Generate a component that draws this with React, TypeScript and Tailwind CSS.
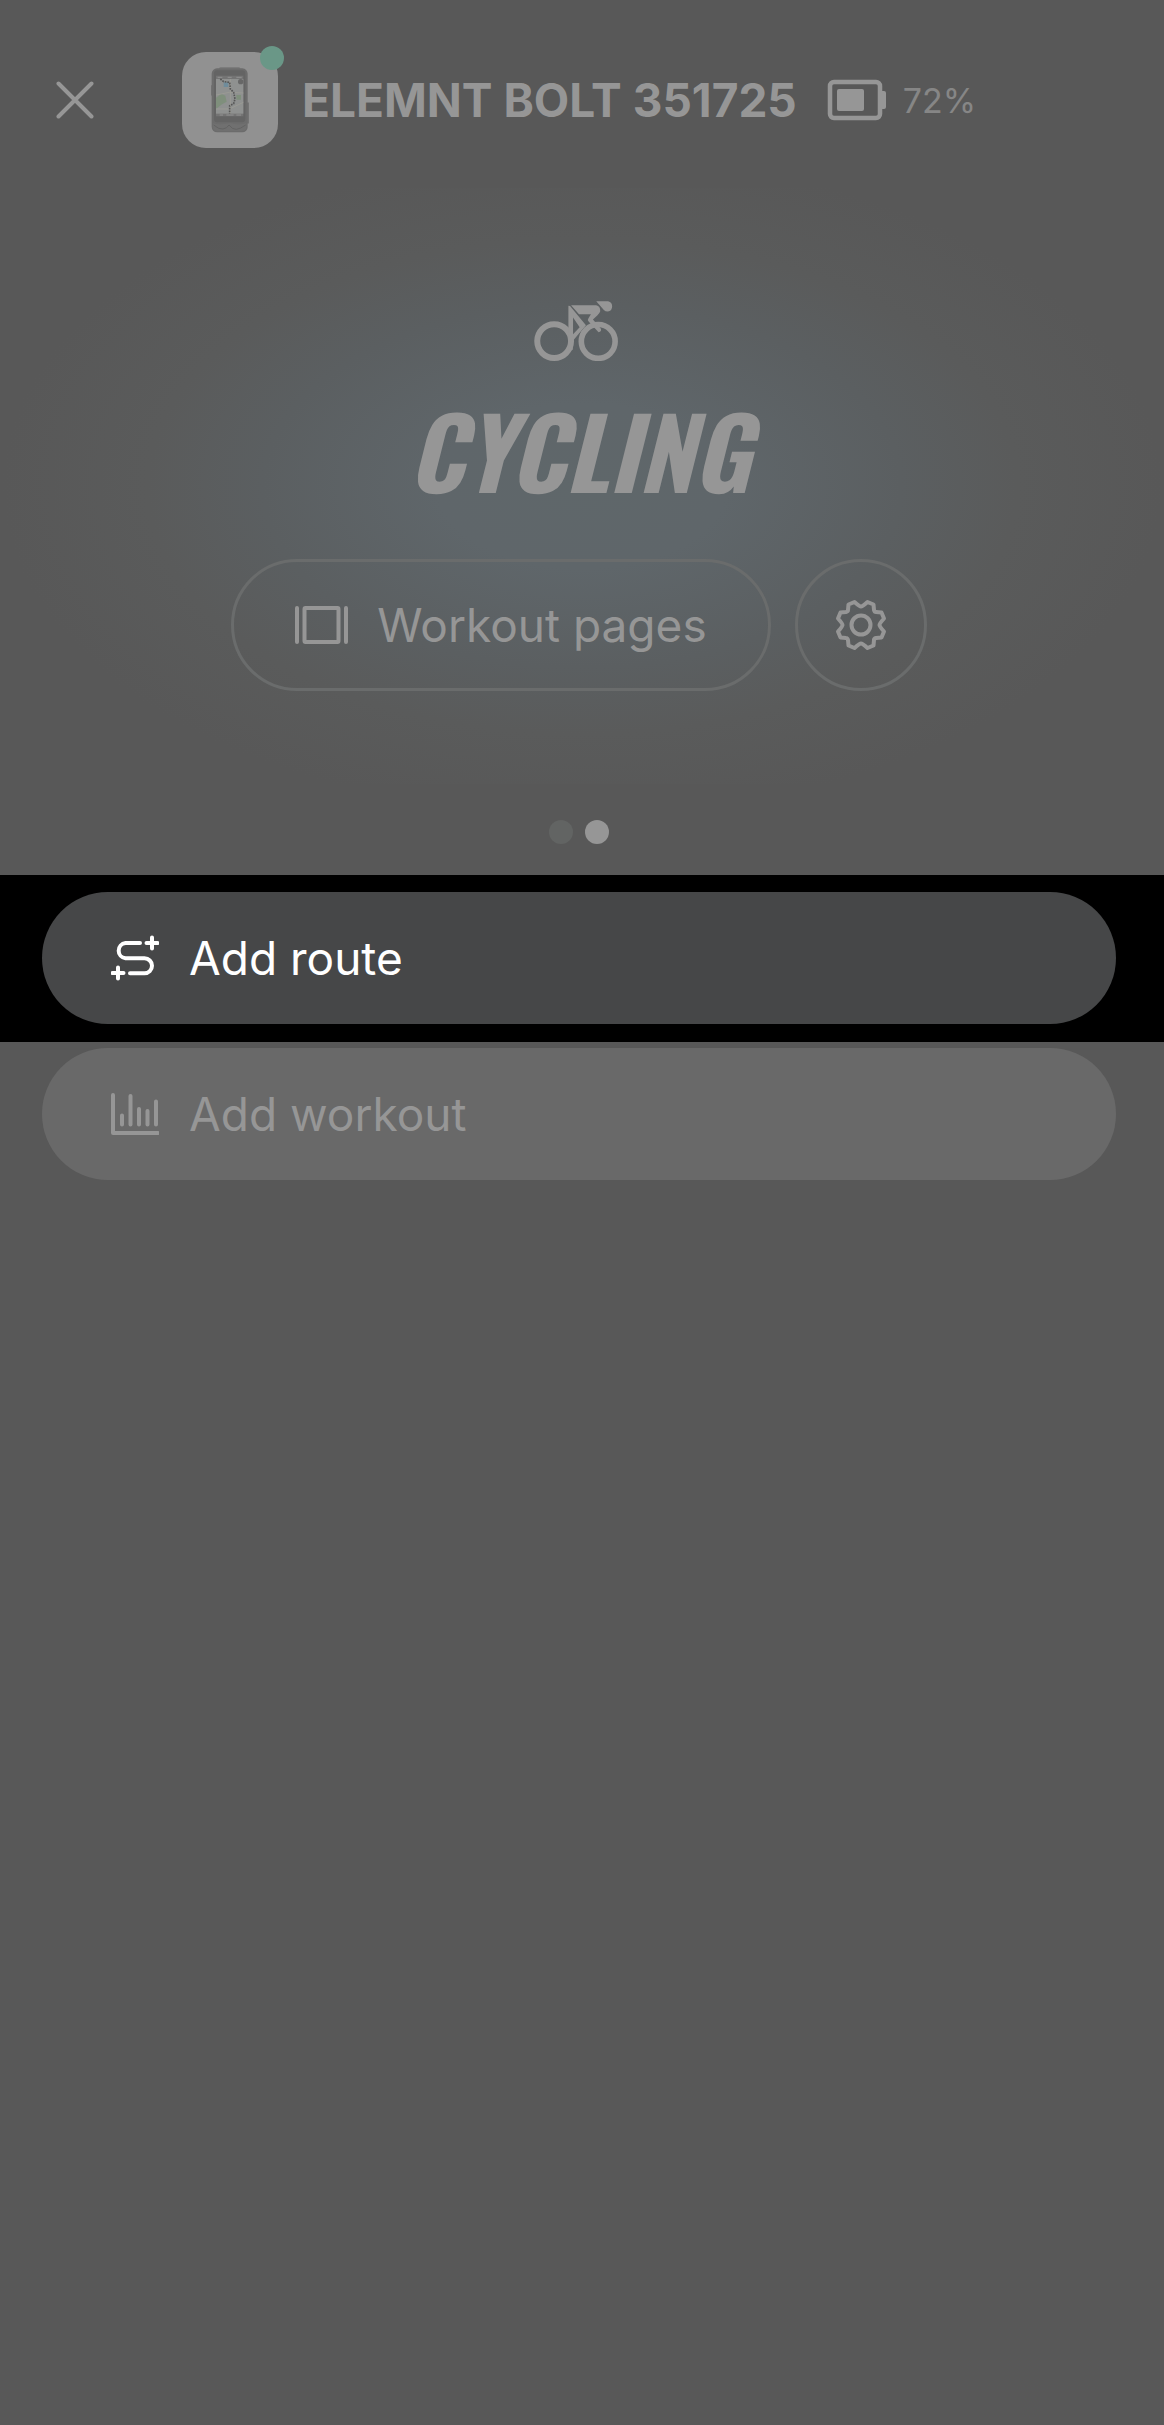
import type { ReactNode } from "react"

const CloseIcon = () => (
  <svg width="38" height="38" viewBox="0 0 38 38" fill="none" stroke="currentColor" strokeWidth="4" strokeLinecap="round">
    <path d="M2.5 2.5l33 33M35.5 2.5l-33 33" />
  </svg>
)

const DeviceIcon = () => (
  <svg width="38" height="66" viewBox="0 0 114 198">
    <rect x="0" y="54" width="6" height="32" rx="3" fill="#747474" />
    <rect x="108" y="106" width="6" height="64" rx="3" fill="#747474" />
    <rect x="24" y="0" width="64" height="12" rx="5" fill="#7c7c7c" />
    <rect x="2" y="4" width="108" height="192" rx="16" fill="#6c6c6c" />
    <rect x="9" y="10" width="94" height="156" rx="10" fill="#646464" />
    <path d="M6 168q20 8 50 0q32 8 50 0v12q0 12-14 12H20q-14 0-14-12z" fill="#707070" />
    <path d="M8 174q16 14 28 12t18-12q10 14 22 13t28-13" fill="none" stroke="#636363" strokeWidth="3" />
    <rect x="15" y="26" width="82" height="122" fill="#747474" />
    <rect x="15" y="36" width="82" height="104" fill="#8f9190" />
    <path d="M15 92l16-12 12 6 4 18-14 8-18 14zM76 84h14v14H76z" fill="#7f8f7c" />
    <rect x="38" y="46" width="14" height="14" fill="#6f8c9b" />
    <path d="M15 84l40-8 42 2M58 36v104M15 126h40l42-20" fill="none" stroke="#9a9a94" strokeWidth="3" />
    <path d="M28 36l10 8 18 2 2 20 10 10 4 20-4 14-12 6v24" fill="none" stroke="#565656" strokeWidth="5" strokeDasharray="5 3" />
    <circle cx="89" cy="44" r="8" fill="#676767" />
    <path d="M20 31h14M50 31h12M76 31h16M26 144h10M46 144h22M76 144h14" stroke="#919191" strokeWidth="3" />
  </svg>
)

const BatteryIcon = () => (
  <svg width="60" height="42" viewBox="0 0 60 42" fill="none">
    <rect x="3" y="3" width="50" height="36" rx="4" stroke="currentColor" strokeWidth="4.5" />
    <rect x="10" y="10" width="27" height="22" rx="2" fill="currentColor" />
    <path d="M54 12h3q2 0 2 2v14q0 2-2 2h-3z" fill="currentColor" />
  </svg>
)

const BikeIcon = () => (
  <svg width="90" height="60" viewBox="102 62 270 181" fill="none">
    <circle cx="162" cy="183" r="51" stroke="currentColor" strokeWidth="18" />
    <circle cx="295" cy="184" r="51" stroke="currentColor" strokeWidth="17" />
    <path
      d="M205 76l5 1 48 58-40 48v26l-13 6zM219 112v50l20-21z"
      fill="currentColor"
      fillRule="evenodd"
    />
    <path
      d="M213 75h76q13 3 12 18-2 7-9 13l-13 12 24 28q3 9-7 10l-30-32q-5-5 0-11l7-11h-36z"
      fill="currentColor"
    />
    <path d="M289 63h36q12 3 12 15 0 14-13 16-8 0-12-5z" fill="currentColor" />
  </svg>
)

const PagesIcon = () => (
  <svg width="54" height="38" viewBox="0 0 54 38" fill="none" stroke="currentColor" strokeWidth="4" strokeLinecap="round">
    <path d="M2 2v34M51 2v34" />
    <rect x="9.5" y="2" width="34" height="34" rx="1" />
  </svg>
)

const GearIcon = () => (
  <svg width="52" height="52" viewBox="-26 -26 52 52" fill="none" stroke="currentColor" strokeWidth="4" strokeLinejoin="round">
    <circle r="9.5" />
    <path d="M0-18.5Q1.5-18.5 6.5-23L12.5-20.5 13-15Q13.5-13 15-13L20.5-12.5 23-6.5Q18.5-1.5 18.5 0Q18.5 1.5 23 6.5L20.5 12.5 15 13Q13 13.5 13 15L12.5 20.5 6.5 23Q1.5 18.5 0 18.5Q-1.5 18.5-6.5 23L-12.5 20.5-13 15Q-13.5 13-15 13L-20.5 12.5-23 6.5Q-18.5 1.5-18.5 0Q-18.5-1.5-23-6.5L-20.5-12.5-15-13Q-13-13.5-13-15L-12.5-20.5-6.5-23Q-1.5-18.5 0-18.5z" />
  </svg>
)

const RouteIcon = () => (
  <svg width="48" height="46" viewBox="0 0 48 46" fill="none" stroke="currentColor" strokeWidth="4" strokeLinecap="round">
    <path d="M29 8H14.5a7.7 7.7 0 0 0 0 15.3H33.5a7.5 7.5 0 0 1 0 15H19" />
    <path d="M41 2.5v11M35.5 8h11M7 32.5v11M1.5 38h11" />
  </svg>
)

const ChartIcon = () => (
  <svg width="48" height="42" viewBox="0 0 48 42" fill="none" stroke="currentColor" strokeWidth="4" strokeLinecap="round" strokeLinejoin="round">
    <path d="M2 2v38h45M11 22.5v9M19.5 3v28.5M28 16v15.5M36.5 18v13.5M45 8.5v23" />
  </svg>
)

function ActionButton({ icon, label, className }: { icon: ReactNode; label: string; className: string }) {
  return (
    <button className={`flex h-[132px] w-full items-center gap-[30px] rounded-full pl-[69px] text-left text-[46px] ${className}`}>
      {icon}
      <span>{label}</span>
    </button>
  )
}

export default function App() {
  return (
    <main className="min-h-screen bg-[#585858] font-['Inter',sans-serif] text-[#969696]">

      {/* Header */}
      <header className="flex items-center pt-[52px] pl-14">
        <button aria-label="Close">
          <CloseIcon />
        </button>
        <div className="relative ml-[88px] flex size-24 items-center justify-center rounded-3xl bg-[#919191]">
          <DeviceIcon />
          <span className="absolute -top-1.5 -right-1.5 size-6 rounded-full bg-[#6a9787]" />
        </div>
        <h1 className="ml-6 text-[46px] font-bold whitespace-nowrap">ELEMNT BOLT 351725</h1>
        <div className="ml-[30px] flex items-center gap-4">
          <BatteryIcon />
          <span className="text-[34px] text-[#868686]">72%</span>
        </div>
      </header>

      {/* Activity */}
      <section className="mt-10 flex h-[596px] flex-col items-center bg-[radial-gradient(ellipse_580px_330px_at_50%_50%,#5f676a_0%,#5f666a_25%,#5b5f61_55%,#5a5b5b_75%,#585858_100%)] pt-[113px] pr-1.5">
        <BikeIcon />
        <h2 className="mt-8 font-['Oswald','Roboto_Condensed',sans-serif] text-[98px] leading-[112px] font-bold italic">CYCLING</h2>
        <div className="mt-[54px] flex gap-6">
          <button className="flex h-[132px] items-center gap-7 rounded-full border-3 border-[#6a6c6c] px-[61px] text-[46px]">
            <PagesIcon />
            Workout pages
          </button>
          <button aria-label="Settings" className="flex size-[132px] items-center justify-center rounded-full border-3 border-[#6a6c6c]">
            <GearIcon />
          </button>
        </div>
      </section>

      {/* Page dots */}
      <div className="flex justify-center gap-3 pt-9 pr-1.5 pb-[31px]">
        <span className="size-6 rounded-full bg-[#626463]" />
        <span className="size-6 rounded-full bg-[#969696]" />
      </div>

      {/* Actions */}
      <div className="bg-black pt-[17px] pr-12 pb-[18px] pl-[42px]">
        <ActionButton icon={<RouteIcon />} label="Add route" className="bg-[#464748] text-white" />
      </div>
      <div className="pt-1.5 pr-12 pl-[42px]">
        <ActionButton icon={<ChartIcon />} label="Add workout" className="bg-[#696969]" />
      </div>
    </main>
  )
}
